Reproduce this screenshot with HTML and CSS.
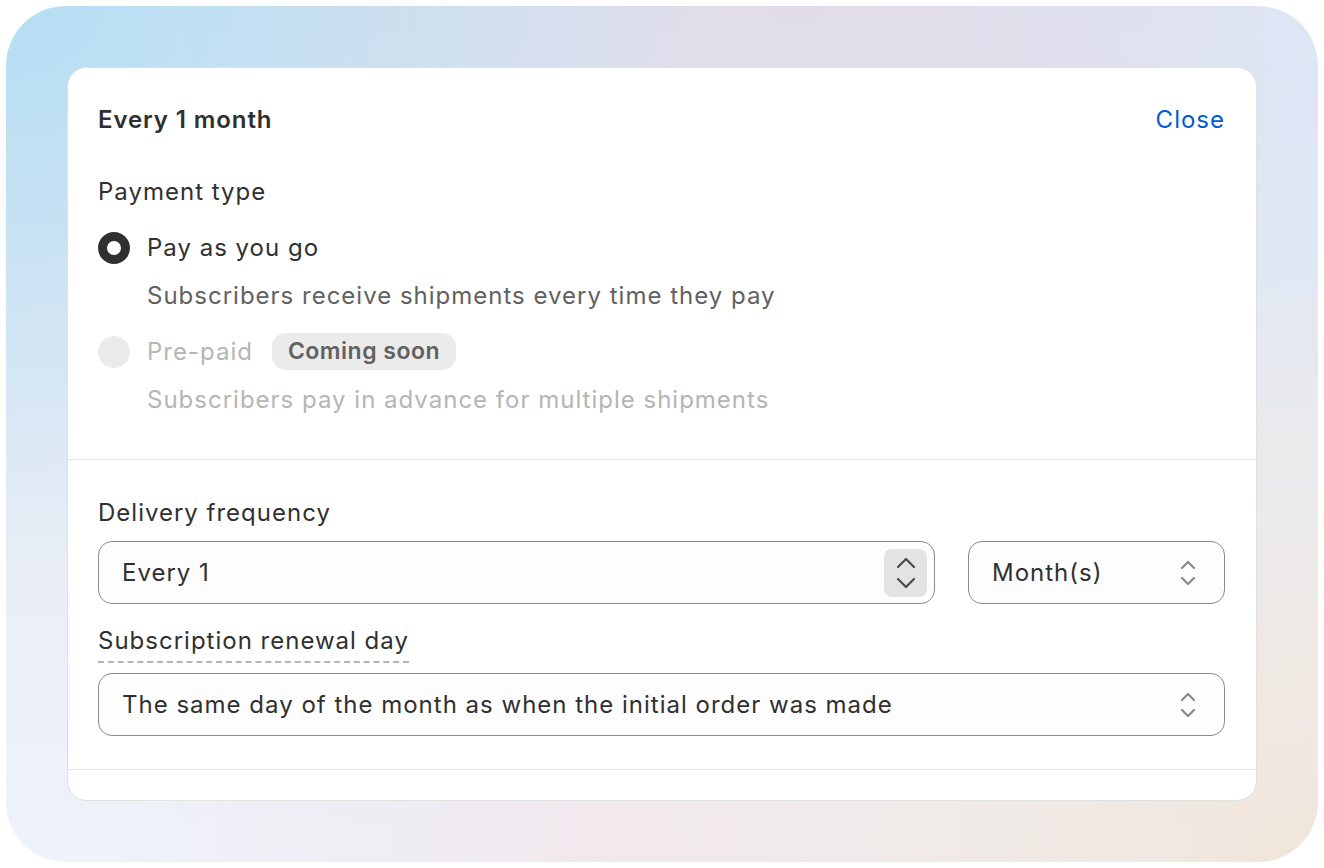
FILE: index.html
```html
<!DOCTYPE html>
<html lang="en">
<head>
    <meta charset="UTF-8">
    <meta name="viewport" content="width=device-width, initial-scale=1.0">
    <title>Subscription plan</title>
    <link rel="stylesheet" href="styles.css">
</head>
<body>
    <div class="frame">
        <div class="card">
            <div class="section">
                <div class="card-header">
                    <h2>Every 1 month</h2>
                    <a href="#" class="link">Close</a>
                </div>

                <p class="label payment-label">Payment type</p>

                <div class="choice">
                    <span class="radio checked"></span>
                    <span class="choice-text">Pay as you go</span>
                </div>
                <p class="help">Subscribers receive shipments every time they pay</p>

                <div class="choice disabled prepaid">
                    <span class="radio"></span>
                    <span class="choice-text">Pre-paid</span>
                    <span class="badge">Coming soon</span>
                </div>
                <p class="help disabled-help">Subscribers pay in advance for multiple shipments</p>
            </div>

            <div class="section section-form">
                <p class="label">Delivery frequency</p>
                <div class="row">
                    <div class="field grow">
                        <span>Every 1</span>
                        <span class="spinner">
                            <svg width="22" height="14" viewBox="0 0 22 14"><path d="M3 11 L11 3 L19 11" fill="none" stroke="#4a4a4a" stroke-width="2.2" stroke-linecap="round" stroke-linejoin="round"/></svg>
                            <svg width="22" height="14" viewBox="0 0 22 14"><path d="M3 3 L11 11 L19 3" fill="none" stroke="#4a4a4a" stroke-width="2.2" stroke-linecap="round" stroke-linejoin="round"/></svg>
                        </span>
                    </div>
                    <div class="field unit">
                        <span>Month(s)</span>
                        <svg class="select-icon" width="18" height="30" viewBox="0 0 18 30"><path d="M3 10 L9 4 L15 10 M3 20 L9 26 L15 20" fill="none" stroke="#8a8a8a" stroke-width="2.2" stroke-linecap="round" stroke-linejoin="round"/></svg>
                    </div>
                </div>

                <p class="label dotted">Subscription renewal day</p>
                <div class="field">
                    <span>The same day of the month as when the initial order was made</span>
                    <svg class="select-icon" width="18" height="30" viewBox="0 0 18 30"><path d="M3 10 L9 4 L15 10 M3 20 L9 26 L15 20" fill="none" stroke="#8a8a8a" stroke-width="2.2" stroke-linecap="round" stroke-linejoin="round"/></svg>
                </div>
            </div>

            <div class="footer"></div>
        </div>
    </div>
</body>
</html>
```

FILE: styles.css
```css
* { box-sizing: border-box; }
body {
    margin: 0;
    background: #fff;
    font-family: Inter, "Noto Sans", sans-serif;
    color: #303030;
    font-size: 24px;
    letter-spacing: 1px;
}
p { margin: 0; }

.frame {
    margin: 6px;
    height: 856px;
    border-radius: 60px;
    padding: 61px 61px 0 61px;
    background:
        radial-gradient(ellipse 60% 70% at 100% 100%, #f1e5da 0%, rgba(241,229,218,0) 100%),
        radial-gradient(ellipse 40% 40% at 45% 100%, #f1e8ee 0%, rgba(241,232,238,0) 100%),
        radial-gradient(ellipse 55% 65% at 0% 0%, #b5def4 0%, rgba(181,222,244,0) 100%),
        radial-gradient(ellipse 50% 50% at 60% 0%, #e2dcea 0%, rgba(226,220,234,0) 100%),
        radial-gradient(ellipse 40% 50% at 100% 0%, #dde8f8 0%, rgba(221,232,248,0) 100%),
        linear-gradient(180deg, #dfe3ee 0%, #eef3fb 100%);
}

.card {
    background: #fff;
    border: 1.5px solid #e1e1e1;
    border-radius: 20px;
    overflow: hidden;
}

.section {
    padding: 36px 31px 43px 30px;
    border-bottom: 1.5px solid #e6e6e6;
}

.card-header {
    display: flex;
    justify-content: space-between;
    align-items: center;
    line-height: 32px;
}
.card-header h2 {
    margin: 0;
    font-size: 24px;
    font-weight: 600;
    letter-spacing: 0.9px;
}
.link {
    color: #005bd3;
    text-decoration: none;
}

.label { line-height: 32px; }
.payment-label { margin-top: 40px; }

.choice {
    display: flex;
    align-items: center;
    margin-top: 24px;
    line-height: 32px;
}
.radio {
    width: 32px;
    height: 32px;
    border-radius: 50%;
    background: #ebebeb;
    margin-right: 17px;
    flex-shrink: 0;
}
.radio.checked {
    background: #fff;
    border: 9px solid #303030;
}
.help {
    margin-top: 16px;
    margin-left: 49px;
    line-height: 32px;
    color: #616161;
}
.prepaid { margin-top: 21px; }
.disabled .choice-text { color: #b5b5b5; }
.badge {
    margin-left: 19px;
    background: #ebebeb;
    color: #616161;
    font-weight: 600;
    font-size: 23px;
    padding: 2px 16px;
    border-radius: 14px;
    line-height: 33px;
    letter-spacing: 0.5px;
}
.disabled-help {
    margin-top: 14px;
    color: #b5b5b5;
}

.section-form { padding: 37px 31px 33px 30px; }
.row {
    display: flex;
    gap: 33px;
    margin-top: 12px;
    margin-bottom: 22px;
}
.grow { flex: 1; }
.unit { width: 257px; }

.field {
    display: flex;
    align-items: center;
    justify-content: space-between;
    height: 63px;
    border: 1.5px solid #8a8a8a;
    border-radius: 14px;
    background: #fdfdfd;
    padding: 0 7px 0 23px;
}
.field .select-icon { margin-right: 20px; }
.spinner {
    display: flex;
    flex-direction: column;
    align-items: center;
    justify-content: center;
    gap: 6px;
    width: 43px;
    height: 48px;
    border-radius: 8px;
    background: #e3e3e3;
}

.dotted {
    display: inline-block;
    border-bottom: 2px dashed #b5b5b5;
    line-height: 30px;
    padding-bottom: 5px;
    margin-bottom: 10px;
}

.footer { height: 30px; }
```
